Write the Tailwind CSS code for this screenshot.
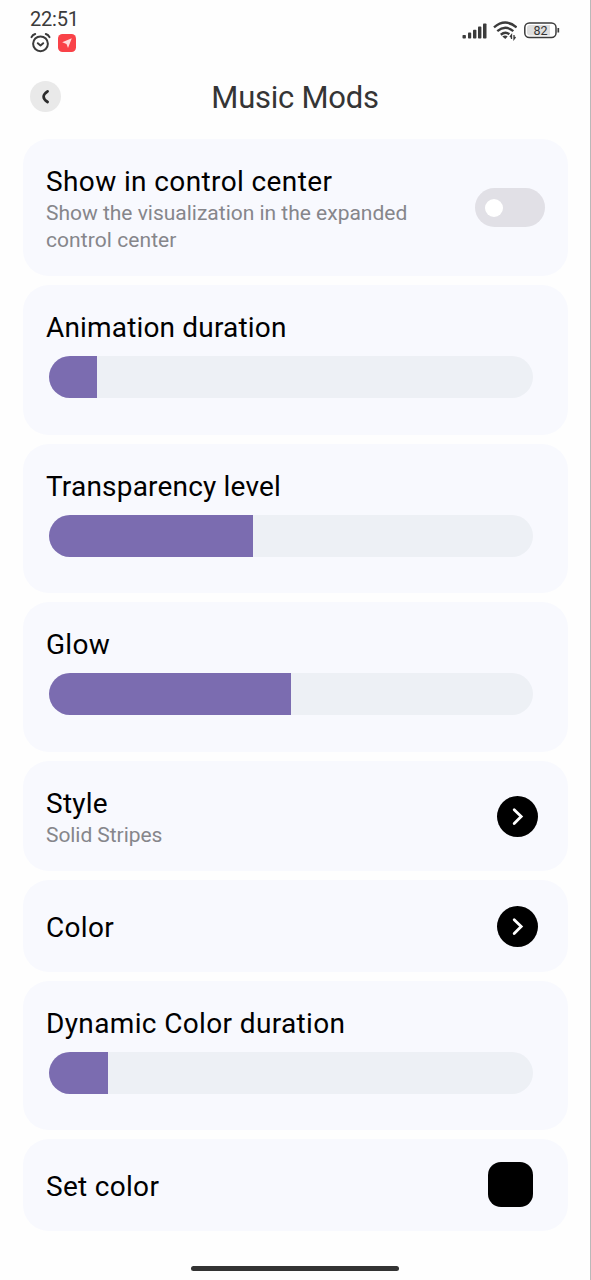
<!DOCTYPE html>
<html lang="en">
<head>
<meta charset="utf-8">
<title>Music Mods</title>
<script src="https://cdn.jsdelivr.net/npm/@tailwindcss/browser@4"></script>
</head>
<body class="bg-[#fefefe] font-['Roboto',sans-serif] text-black">
<div class="w-[591px] h-[1280px] overflow-hidden border-r border-[#b9b9b9] flex flex-col">
  <header class="h-[60px] shrink-0 flex justify-between pl-[30px] pr-[30px] text-[#3b3b3b]">
    <div class="pt-[8px]">
      <div class="h-[22px] leading-[22px] text-[20px] tracking-[-0.200px] whitespace-nowrap">22:51</div>
      <div class="flex items-center gap-[7px] mt-[2px]">
        <svg class="w-[21px] h-[21px]" viewBox="0 0 21 21" fill="none" stroke="currentColor" stroke-width="2" stroke-linecap="round" stroke-linejoin="round"><circle cx="10.5" cy="11.8" r="7.4"/><path d="M1.500 5.200C2.200 3.700 3.500 2.500 5.200 2M19.500 5.200C18.800 3.700 17.500 2.500 15.800 2M7.800 11.200l2.700 2.300 2.700-2.300"/></svg>
        <svg class="w-[18px] h-[18px]" viewBox="0 0 18 18"><rect width="18" height="18" rx="4.500" fill="#f94248"/><path d="M13.800 4.200 4.200 8.300l4.300 1.700 1.500 4.100z" fill="#ffdcdc"/></svg>
      </div>
    </div>
    <div class="flex gap-[7px] pt-[21px]">
      <svg class="w-[26px] h-[19px]" viewBox="0 0 26 19" fill="currentColor"><rect x=".5" y="14" width="3.400" height="3.600" rx=".8"/><rect x="6" y="11.600" width="3.200" height="6" rx=".8"/><rect x="11" y="8.800" width="3.400" height="8.800" rx=".8"/><rect x="16" y="5.600" width="3.400" height="12" rx=".8"/><rect x="21" y="2.400" width="3.500" height="15.200" rx=".8"/></svg>
      <svg class="w-[24px] h-[20px] -ml-[2px]" viewBox="0 0 24 20" fill="none" stroke="currentColor" stroke-width="2.400"><path d="M1 6.400Q12.300-3.200 23.600 6.400M4.300 10.200Q12.300 3.500 20.300 10.200M7.800 13.700Q12.300 10 16.300 13.200"/><path d="M9.300 15.500Q12.300 13.500 14.700 15.500L12.300 18z" fill="currentColor" stroke="none"/><path d="M18.500 18v-4l-1.500 2M21 14v4l1.500-2" stroke-width="1.300"/></svg>
      <svg class="w-[37px] h-[18px] -ml-[1px]" viewBox="0 0 37 18"><rect x="1.800" y="2" width="31.200" height="14.600" rx="4.500" fill="#fff" stroke="#3b3b3b" stroke-width="1.500"/><path d="M7 4h20v10.600H7a3 3 0 0 1-3-3V7a3 3 0 0 1 3-3z" fill="#dedede"/><path d="M35.300 7v4.500" stroke="#3b3b3b" stroke-width="1.700"/><text x="17.500" y="13.500" text-anchor="middle" font-size="12.500" fill="#333">82</text></svg>
    </div>
  </header>
  <div class="h-[79px] shrink-0 grid grid-cols-[31px_1fr_31px] items-start px-[30px] pt-[21px]">
    <div class="size-[31px] rounded-full bg-[#e9e9e9] flex items-center justify-center">
      <svg class="size-[31px]" viewBox="0 0 31 31" fill="none" stroke="#2b2b2b" stroke-width="2.700" stroke-linecap="round" stroke-linejoin="round"><path d="M17.600 10.300C15 12 13.600 13.800 13.600 15.700s1.400 3.600 4 5.300"/></svg>
    </div>
    <h1 class="text-center text-[31px] leading-[32px] pt-px font-[450] tracking-[-0.250px] text-[#353535]">Music Mods</h1>
  </div>
  <main class="flex flex-col gap-[9px] w-[545px] ml-[23px] *:rounded-[26px] *:bg-[#f8f9fe] *:shrink-0">
    <section class="h-[137px] flex items-start justify-between pl-[23px] pr-[23px] pt-[26px]">
      <div>
        <h2 class="text-[28px] leading-[33px] tracking-[0.385px] whitespace-nowrap">Show in control center</h2>
        <p class="text-[21px] leading-[27px] mt-[2px] text-[#86868b] w-[380px]"><span class="tracking-[-0.010px]">Show the visualization in the expanded</span><br><span class="tracking-[0.070px]">control center</span></p>
      </div>
      <div class="w-[70px] h-[39px] mt-[23px] rounded-full bg-[#e1e0e6] flex items-center pl-[10px]"><div class="size-[18px] rounded-full bg-white"></div></div>
    </section>
    <section class="h-[149.5px] pl-[23px] pt-[26px]">
      <h2 class="text-[28px] leading-[33px] tracking-[0.170px]">Animation duration</h2>
      <div class="ml-[3px] mt-[12px] w-[484px] h-[42px] rounded-full bg-[#edf0f5] overflow-hidden"><div class="h-full bg-[#7b6cb0] w-[48px]"></div></div>
    </section>
    <section class="h-[149.5px] pl-[23px] pt-[26px]">
      <h2 class="text-[28px] leading-[33px] tracking-[0.190px]">Transparency level</h2>
      <div class="ml-[3px] mt-[12px] w-[484px] h-[42px] rounded-full bg-[#edf0f5] overflow-hidden"><div class="h-full bg-[#7b6cb0] w-[204px]"></div></div>
    </section>
    <section class="h-[149.5px] pl-[23px] pt-[26px]">
      <h2 class="text-[28px] leading-[33px] tracking-[0.300px]">Glow</h2>
      <div class="ml-[3px] mt-[12px] w-[484px] h-[42px] rounded-full bg-[#edf0f5] overflow-hidden"><div class="h-full bg-[#7b6cb0] w-[242px]"></div></div>
    </section>
    <section class="h-[110px] flex items-center justify-between pl-[23px] pr-[30px]">
      <div class="self-start pt-[26px]">
        <h2 class="text-[28px] leading-[33px] tracking-[0.250px]">Style</h2>
        <p class="text-[21px] leading-[27px] mt-[2px] text-[#86868b] tracking-[-0.060px]">Solid Stripes</p>
      </div>
      <svg class="size-[41px] mt-px" viewBox="0 0 41 41"><circle cx="20.500" cy="20.500" r="20.500"/><path d="M17.200 13.700l7 6.900-7 6.900" fill="none" stroke="#fff" stroke-width="2.800" stroke-linecap="round"/></svg>
    </section>
    <section class="h-[92px] flex items-center justify-between pl-[23px] pr-[30px]">
      <h2 class="text-[28px] leading-[33px] pt-[3px] tracking-[0.300px]">Color</h2>
      <svg class="size-[41px] mt-px" viewBox="0 0 41 41"><circle cx="20.500" cy="20.500" r="20.500"/><path d="M17.200 13.700l7 6.900-7 6.900" fill="none" stroke="#fff" stroke-width="2.800" stroke-linecap="round"/></svg>
    </section>
    <section class="h-[149.5px] pl-[23px] pt-[26px]">
      <h2 class="text-[28px] leading-[33px] tracking-[0.360px]">Dynamic Color duration</h2>
      <div class="ml-[3px] mt-[12px] w-[484px] h-[42px] rounded-full bg-[#edf0f5] overflow-hidden"><div class="h-full bg-[#7b6cb0] w-[59px]"></div></div>
    </section>
    <section class="h-[91.5px] flex items-center justify-between pl-[23px] pr-[35px]">
      <h2 class="text-[28px] leading-[33px] pt-[3px] tracking-[0.300px]">Set color</h2>
      <div class="size-[45px] rounded-[13px] bg-black"></div>
    </section>
  </main>
  <div class="mt-[35.500px] ml-[191px] w-[208px] h-[5px] shrink-0 rounded-full bg-[#333]"></div>
</div>
</body>
</html>
